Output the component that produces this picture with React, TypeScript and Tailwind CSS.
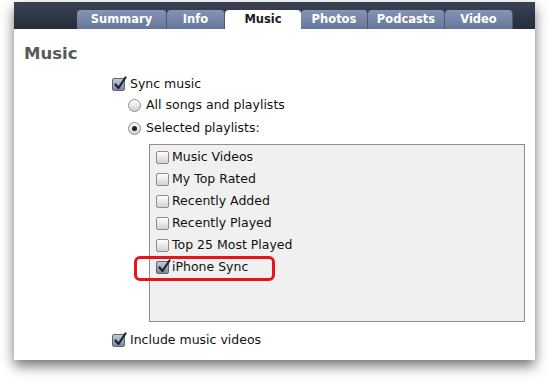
import React from 'react';

const tabs = [
  { label: 'Summary', w: 'w-[90px]' },
  { label: 'Info', w: 'w-[58px]' },
  { label: 'Music', w: 'w-[76px]', active: true },
  { label: 'Photos', w: 'w-[67px]' },
  { label: 'Podcasts', w: 'w-[77px]' },
  { label: 'Video', w: 'w-[68px]' },
];

const playlists = [
  { name: 'Music Videos', checked: false },
  { name: 'My Top Rated', checked: false },
  { name: 'Recently Added', checked: false },
  { name: 'Recently Played', checked: false },
  { name: 'Top 25 Most Played', checked: false },
  { name: 'iPhone Sync', checked: true },
];

const Checkbox: React.FC<{ checked?: boolean }> = ({ checked }) => (
  <span
    className={
      'relative inline-block w-[13px] h-[13px] shrink-0 rounded-[2px] border ' +
      (checked
        ? 'border-[#5b6473] bg-gradient-to-b from-[#c3cad6] to-[#7e899c]'
        : 'border-[#8c8c8c] bg-gradient-to-b from-[#ffffff] to-[#d2d2d2]')
    }
  >
    {checked && (
      <svg className="absolute left-[1px] -top-[3px]" width="13" height="14" viewBox="0 0 13 14">
        <path d="M1.5 8.5 L4.5 12 L11.5 1.5" fill="none" stroke="#1c2230" strokeWidth="2.2" strokeLinecap="round" strokeLinejoin="round" />
      </svg>
    )}
  </span>
);

const Radio: React.FC<{ selected?: boolean }> = ({ selected }) => (
  <span className="relative flex items-center justify-center w-[13px] h-[13px] shrink-0 rounded-full border border-[#8c8c8c] bg-gradient-to-b from-[#ffffff] to-[#cfcfcf]">
    {selected && <span className="w-[5px] h-[5px] rounded-full bg-[#222]" />}
  </span>
);

const App: React.FC = () => {
  return (
    <div className="w-[549px] h-[383px] bg-white overflow-hidden pt-[2px] pl-[14px]" style={{ fontFamily: '"DejaVu Sans", Verdana, sans-serif' }}>
      <div className="w-[521px] bg-white shadow-[0_6px_12px_rgba(0,0,0,0.55)]">
        {/* Tab bar */}
        <div className="h-[27px] bg-gradient-to-b from-[#3a4254] to-[#262d3c] flex items-end pl-[63px]">
          {tabs.map((t) => (
            <div
              key={t.label}
              className={
                t.w +
                ' h-[19px] rounded-t-[4px] flex items-center justify-center text-[11.5px] font-bold ' +
                (t.active
                  ? 'bg-white text-[#1a1a1a]'
                  : 'bg-gradient-to-b from-[#8594b4] to-[#66769a] text-white border-r border-[#4c5770]')
              }
            >
              {t.label}
            </div>
          ))}
        </div>

        {/* Panel */}
        <div className="h-[331px] pt-[13px] pl-[10px]">
          <div className="h-[24px] flex items-center text-[16.5px] font-bold text-[#585858]">Music</div>

          <div className="mt-[8px] pl-[88px]">
            <div className="h-[20px] flex items-center gap-[5px] text-[12.5px] text-[#111]">
              <Checkbox checked />
              <span>Sync music</span>
            </div>

            <div className="pl-[16px]">
              <div className="h-[23px] flex items-center gap-[5px] text-[12.5px] text-[#111]">
                <Radio />
                <span>All songs and playlists</span>
              </div>
              <div className="h-[23px] flex items-center gap-[5px] text-[12.5px] text-[#111]">
                <Radio selected />
                <span>Selected playlists:</span>
              </div>
            </div>

            <div className="relative mt-[4px] ml-[37px] w-[376px] h-[178px] border border-[#8e8e8e] bg-[#f0f0f0] pt-[1px] pl-[6px]">
              {playlists.map((p) => (
                <div key={p.name} className="h-[22px] flex items-center gap-[3px] text-[12.5px] text-[#111]">
                  <Checkbox checked={p.checked} />
                  <span>{p.name}</span>
                </div>
              ))}
              <div className="absolute -left-[16px] top-[111px] w-[141px] h-[25px] rounded-[6px] border-[3px] border-[#e8141c]" />
            </div>

            <div className="mt-[8px] h-[20px] flex items-center gap-[5px] text-[12.5px] text-[#111]">
              <Checkbox checked />
              <span>Include music videos</span>
            </div>
          </div>
        </div>
      </div>
    </div>
  );
};

export default App;
